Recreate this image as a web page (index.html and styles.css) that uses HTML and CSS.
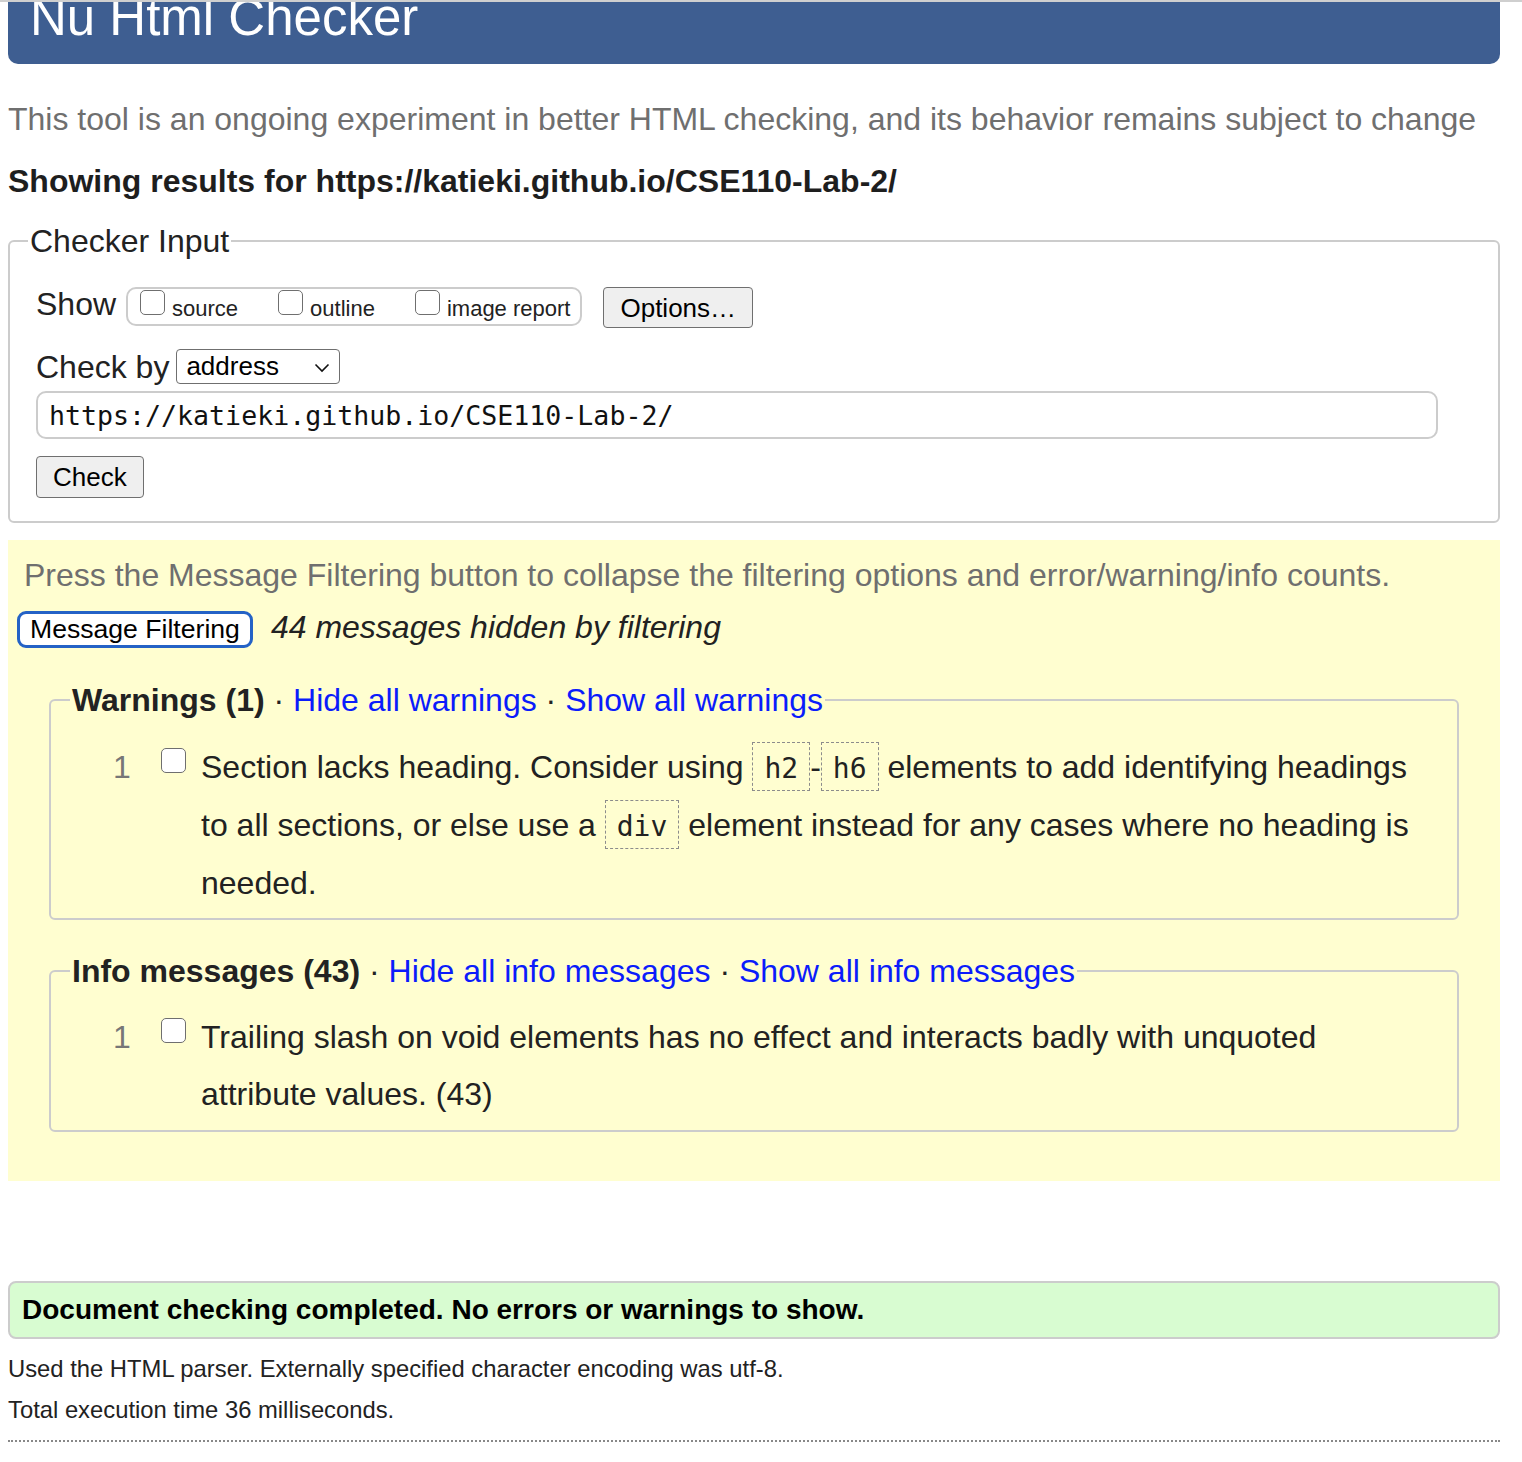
FILE: index.html
```html
<!DOCTYPE html>
<html lang="en">
<head>
<meta charset="utf-8">
<title>Nu Html Checker</title>
<link rel="stylesheet" href="styles.css">
</head>
<body>
<div class="topline"></div>
<div class="page">
  <header class="banner"><h1>Nu Html Checker</h1></header>
  <p class="about">This tool is an ongoing experiment in better HTML checking, and its behavior remains subject to change</p>
  <h2 class="results-for">Showing results for https://katieki.github.io/CSE110-Lab-2/</h2>

  <fieldset class="checker-input">
    <legend>Checker Input</legend>
    <div class="row show-row">
      <span class="label">Show</span>
      <div class="show-box">
        <label class="opt"><span class="cb"></span><span class="opt-text">source</span></label>
        <label class="opt"><span class="cb"></span><span class="opt-text">outline</span></label>
        <label class="opt"><span class="cb"></span><span class="opt-text">image report</span></label>
      </div>
      <button class="btn btn-options" type="button">Options…</button>
    </div>
    <div class="row by-row">
      <span class="label">Check by</span>
      <div class="select"><span>address</span><svg class="chev" width="16" height="10" viewBox="0 0 16 10"><polyline points="1.5,1.5 8,8 14.5,1.5" fill="none" stroke="#111" stroke-width="1.6"/></svg></div>
    </div>
    <div class="url">https://katieki.github.io/CSE110-Lab-2/</div>
    <button class="btn btn-check" type="button">Check</button>
  </fieldset>

  <section class="filters">
    <p class="hint">Press the Message Filtering button to collapse the filtering options and error/warning/info counts.</p>
    <div class="filter-row">
      <button class="mf-btn" type="button">Message Filtering</button>
      <span class="hidden-count">44 messages hidden by filtering</span>
    </div>

    <fieldset class="msgs">
      <legend><strong>Warnings (1)</strong> · <a href="#">Hide all warnings</a> · <a href="#">Show all warnings</a></legend>
      <div class="msg">
        <span class="num">1</span>
        <span class="cb"></span>
        <p>Section lacks heading. Consider using <code class="code">h2</code>-<code class="code">h6</code> elements to add identifying headings to all sections, or else use a <code class="code">div</code> element instead for any cases where no heading is needed.</p>
      </div>
    </fieldset>

    <fieldset class="msgs info">
      <legend><strong>Info messages (43)</strong> · <a href="#">Hide all info messages</a> · <a href="#">Show all info messages</a></legend>
      <div class="msg">
        <span class="num">1</span>
        <span class="cb"></span>
        <p>Trailing slash on void elements has no effect and interacts badly with unquoted attribute values. (43)</p>
      </div>
    </fieldset>
  </section>

  <div class="done">Document checking completed. No errors or warnings to show.</div>
  <div class="details">
    <p class="first">Used the HTML parser. Externally specified character encoding was utf-8.</p>
    <p>Total execution time 36 milliseconds.</p>
  </div>
  <hr class="dotted">
</div>
</body>
</html>
```

FILE: styles.css
```css
* { box-sizing: border-box; }
html, body { margin: 0; padding: 0; background: #fff; }
body {
  font-family: "Liberation Sans", Arial, sans-serif;
  font-size: 32px;
  color: #222;
}
.topline { height: 2px; background: #cfcfcf; }
.page { margin: 0 22px 0 8px; }

.banner {
  height: 62px;
  overflow: hidden;
  background: #3e5e91;
  border-radius: 0 0 10px 10px;
  padding-left: 22px;
}
.banner h1 {
  margin: 0;
  font-size: 51px;
  line-height: 32px;
  font-weight: normal;
  color: #fff;
}
.about { margin: 37px 0 0; line-height: 36px; color: #6f6f6f; }
.results-for { margin: 26px 0 0; font-size: 32px; line-height: 36px; font-weight: bold; color: #1e1e1e; }

fieldset { min-width: 0; }
legend { padding: 0 2px; font-size: 32px; line-height: 36px; }

.checker-input {
  margin: 24px 0 0;
  border: 2px solid #ccc;
  border-radius: 6px;
  padding: 28px 20px 23px 26px;
}
.checker-input legend { margin-left: -8px; color: #222; }

.row { display: flex; align-items: center; }
.label { line-height: 36px; }
.show-row { height: 41px; align-items: flex-start; }
.show-row .label { margin-top: -1px; }
.show-box {
  margin-left: 10px;
  height: 39px;
  border: 2px solid #ccc;
  border-radius: 10px;
  padding: 1px 10px 0 12px;
  display: flex;
  align-items: flex-start;
  gap: 40px;
}
.opt { display: flex; align-items: flex-start; }
.cb {
  display: inline-block;
  flex: none;
  width: 25px;
  height: 25px;
  border: 1.5px solid #6f6f6f;
  border-radius: 5px;
  background: #fff;
}
.opt-text { font-size: 22px; line-height: 25px; margin: 6px 0 0 7px; color: #222; }

.btn {
  font-family: "Liberation Sans", Arial, sans-serif;
  font-size: 26px;
  color: #000;
  background: #efefef;
  border: 1px solid #6f6f6f;
  border-radius: 4px;
  padding: 0 16px;
  line-height: 30px;
}
.btn-options { height: 41px; margin-left: 21px; }

.by-row { margin-top: 21px; height: 35px; }
.select {
  margin-left: 7px;
  width: 164px;
  height: 35px;
  border: 1px solid #6f6f6f;
  border-radius: 4px;
  background: #fff;
  display: flex;
  align-items: center;
  justify-content: space-between;
  padding: 0 9px;
  font-size: 26px;
  color: #000;
}
.chev { display: block; margin-top: 2px; }

.url {
  margin-top: 7px;
  width: 1402px;
  height: 48px;
  border: 2px solid #ccc;
  border-radius: 10px;
  padding: 0 11px;
  font-family: "DejaVu Sans Mono", "Liberation Mono", monospace;
  font-size: 26.6px;
  line-height: 45px;
  color: #111;
}
.btn-check { display: block; height: 42px; margin-top: 17px; }

.filters {
  margin-top: 17px;
  background: #fffed0;
  padding: 17px 0 49px;
}
.hint { margin: 0 0 0 16px; line-height: 36px; color: #6f6f6f; }
.filter-row { display: flex; align-items: baseline; gap: 18px; margin: 18px 0 0 9px; }
.mf-btn {
  height: 37px;
  border: 3px solid #2462c6;
  border-radius: 9px;
  background: #fff;
  font-family: "Liberation Sans", Arial, sans-serif;
  font-size: 26.6px;
  line-height: 31px;
  padding: 0 10px;
  color: #000;
}
.hidden-count { font-style: italic; line-height: 32px; color: #222; }

.msgs {
  margin: 34px 41px 0;
  border: 2px solid #ccc;
  border-radius: 6px;
  padding: 21px 27px 6px 21px;
}
.msgs.info { margin-top: 33px; padding-top: 20px; padding-bottom: 7px; }
.msgs legend { margin-left: -2px; color: #222; }
.msgs legend strong { font-weight: bold; }
.msgs legend a { color: #0b1cfb; text-decoration: none; }

.msg { display: flex; align-items: flex-start; line-height: 57px; }
.msg .num { flex: none; width: 48px; margin-left: 41px; color: #777; }
.msg .cb { margin-top: 9px; margin-right: 15px; }
.msg p { margin: 0; flex: 1; color: #222; }
.code {
  font-family: "DejaVu Sans Mono", "Liberation Mono", monospace;
  font-size: 28px;
  border: 1px dashed #8c8c8c;
  padding: 9px 11px 5px;
  color: #222;
}

.done {
  margin-top: 100px;
  border: 2px solid #ccc;
  border-radius: 8px;
  background: #d8fcd1;
  font-weight: bold;
  font-size: 28px;
  line-height: 54px;
  padding: 0 12px;
  color: #000;
}
.details p { margin: 0; font-size: 23.8px; line-height: 41px; color: #222; }
.details p.first { margin-top: 9px; }
hr.dotted { border: 0; border-top: 2px dotted #888; margin: 10px 0 0; height: 0; }
```
